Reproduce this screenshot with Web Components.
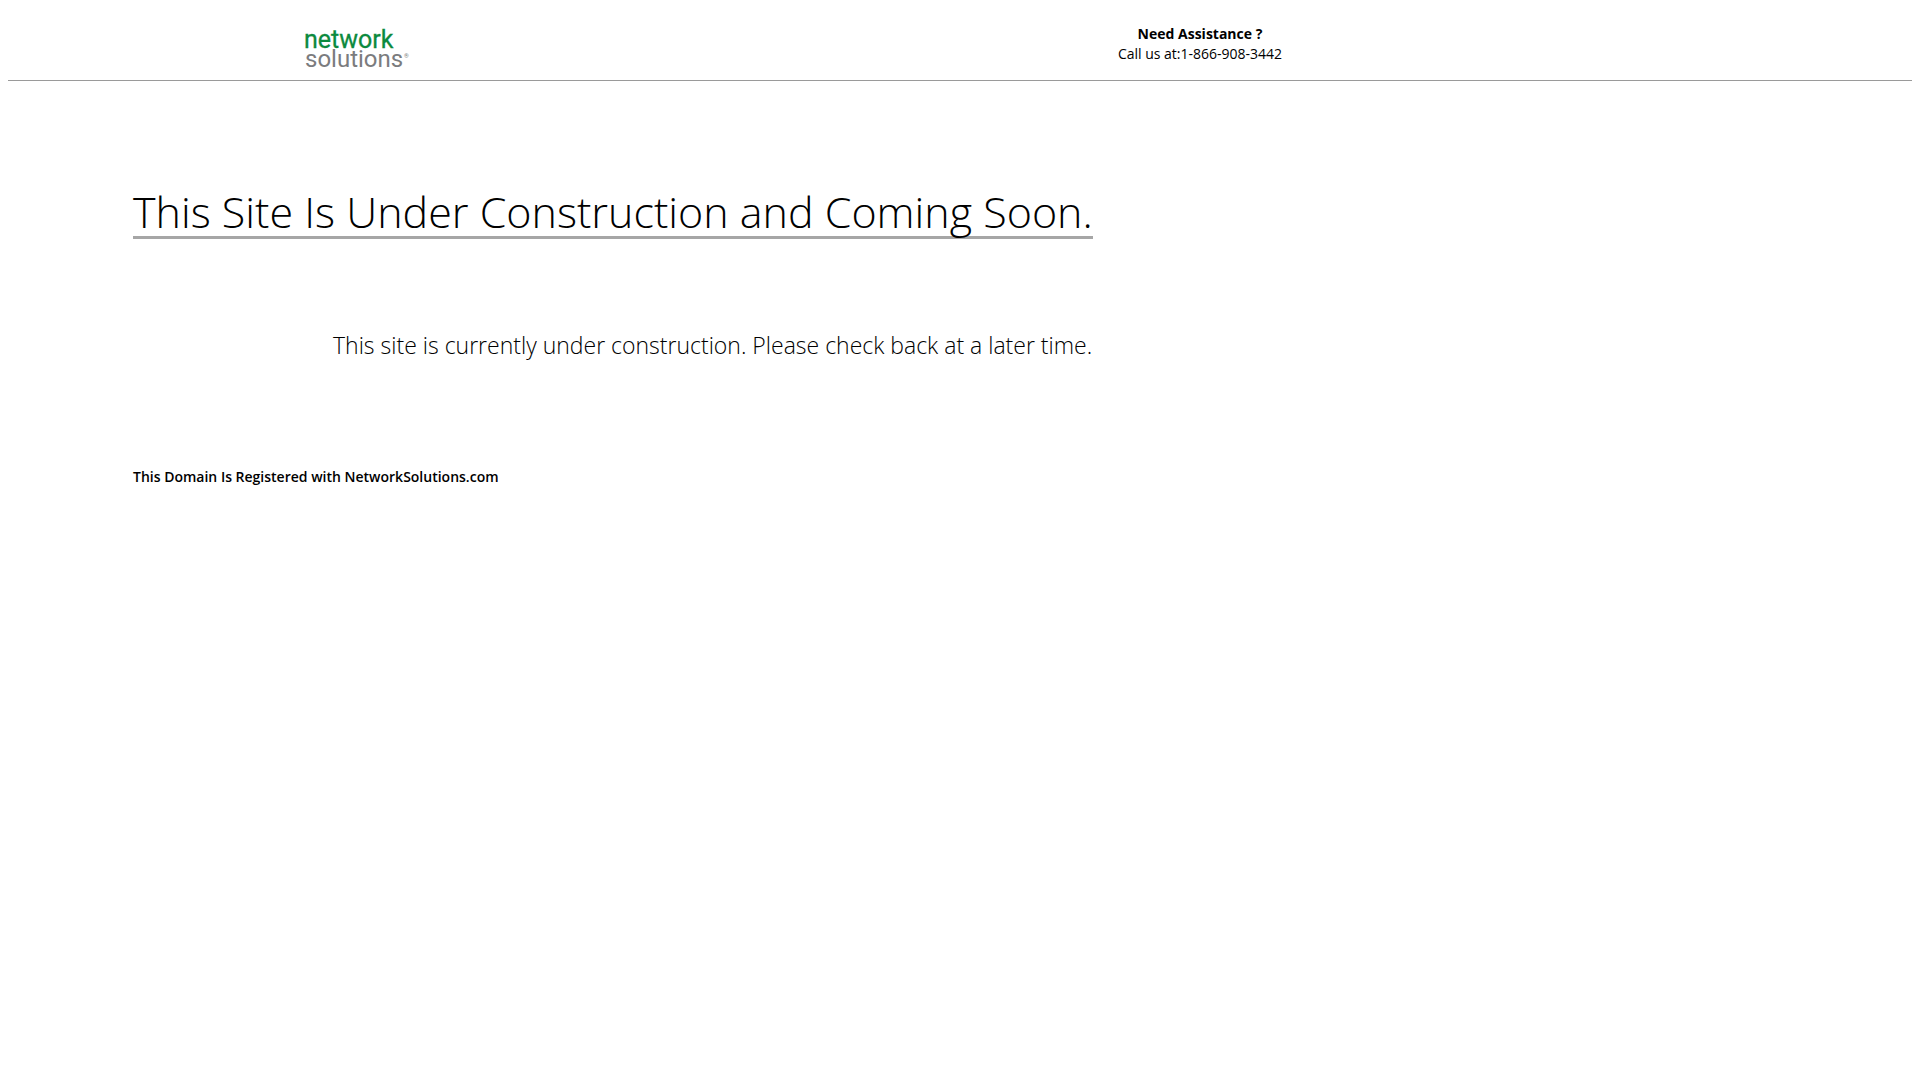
<!DOCTYPE html>
<html lang="en">
<head>
<meta charset="utf-8">
<title>Under Construction</title>
<style>
body { margin: 8px; background: #fff; color: #000; font-family: "Open Sans", sans-serif; }
</style>
</head>
<body>
<coming-soon-page>
  <site-header slot="header">
    <brand-logo slot="brand"></brand-logo>
    <assistance-info slot="help" phone="1-866-908-3442">Need Assistance ?</assistance-info>
  </site-header>
  <page-notice>
    <span slot="title">This Site Is Under Construction and Coming Soon.</span>
    <span slot="message">This site is currently under construction. Please check back at a later time.</span>
    <span slot="domain">This Domain Is Registered with NetworkSolutions.com</span>
  </page-notice>
</coming-soon-page>
<script>
class ShadowElement extends HTMLElement {
  constructor() {
    super();
    this.attachShadow({ mode: "open" }).innerHTML = this.constructor.markup;
  }
}

customElements.define("coming-soon-page", class extends ShadowElement {
  static markup = `
    <style>:host { display: block; }</style>
    <slot name="header"></slot>
    <main><slot></slot></main>`;
});

customElements.define("site-header", class extends ShadowElement {
  static markup = `
    <style>
      :host { display: block; }
      header {
        display: grid; grid-template-columns: 2fr 1fr 1fr; align-items: start;
        padding: 16px 0 8px;
        border-bottom: 1px solid #9a9a9a;
      }
      .brand { padding-left: 296px; }
      .help { display: flex; justify-content: center; padding-left: 4px; }
    </style>
    <header>
      <div class="brand"><slot name="brand"></slot></div>
      <div class="help"><slot name="help"></slot></div>
    </header>`;
});

customElements.define("brand-logo", class extends ShadowElement {
  static markup = `
    <style>
      :host { display: block; width: 106px; }
      svg { display: block; width: 106px; height: 48px; }
      text { font-family: Roboto, "Open Sans", sans-serif; }
    </style>
    <svg viewBox="0 0 106 48" role="img" aria-label="Network Solutions">
      <text x="0" y="24" font-size="25" fill="#0c8a3e" stroke="#0c8a3e" stroke-width=".3">network</text>
      <text x="1" y="43" font-size="24" fill="#7b7c7e">solutions</text>
      <text x="100" y="34" font-size="6" fill="#7b7c7e">®</text>
    </svg>`;
});

customElements.define("assistance-info", class extends ShadowElement {
  static markup = `
    <style>
      :host { display: block; text-align: center; font-size: 14px; line-height: 20px; }
      p { margin: 0; }
      .lead { font-weight: 700; }
    </style>
    <p class="lead"><slot></slot></p>
    <p>Call us at:<span class="phone"></span></p>`;
  connectedCallback() {
    this.shadowRoot.querySelector(".phone").textContent = this.getAttribute("phone");
  }
});

customElements.define("page-notice", class extends ShadowElement {
  static markup = `
    <style>
      :host { display: block; padding: 107px 125px 0; }
      h1, p, h2 { margin: 0; }
      h1 {
        width: fit-content; font-size: 43px; font-weight: 300; line-height: 48px;
        border-bottom: 3px solid #a6a6a6;
      }
      .message { padding: 86px 0 0 200px; font-size: 23px; font-weight: 300; line-height: 40px; }
      h2 { padding-top: 102px; font-size: 14px; font-weight: 600; line-height: 20px; }
    </style>
    <h1><slot name="title"></slot></h1>
    <p class="message"><slot name="message"></slot></p>
    <h2><slot name="domain"></slot></h2>`;
});
</script>
</body>
</html>
